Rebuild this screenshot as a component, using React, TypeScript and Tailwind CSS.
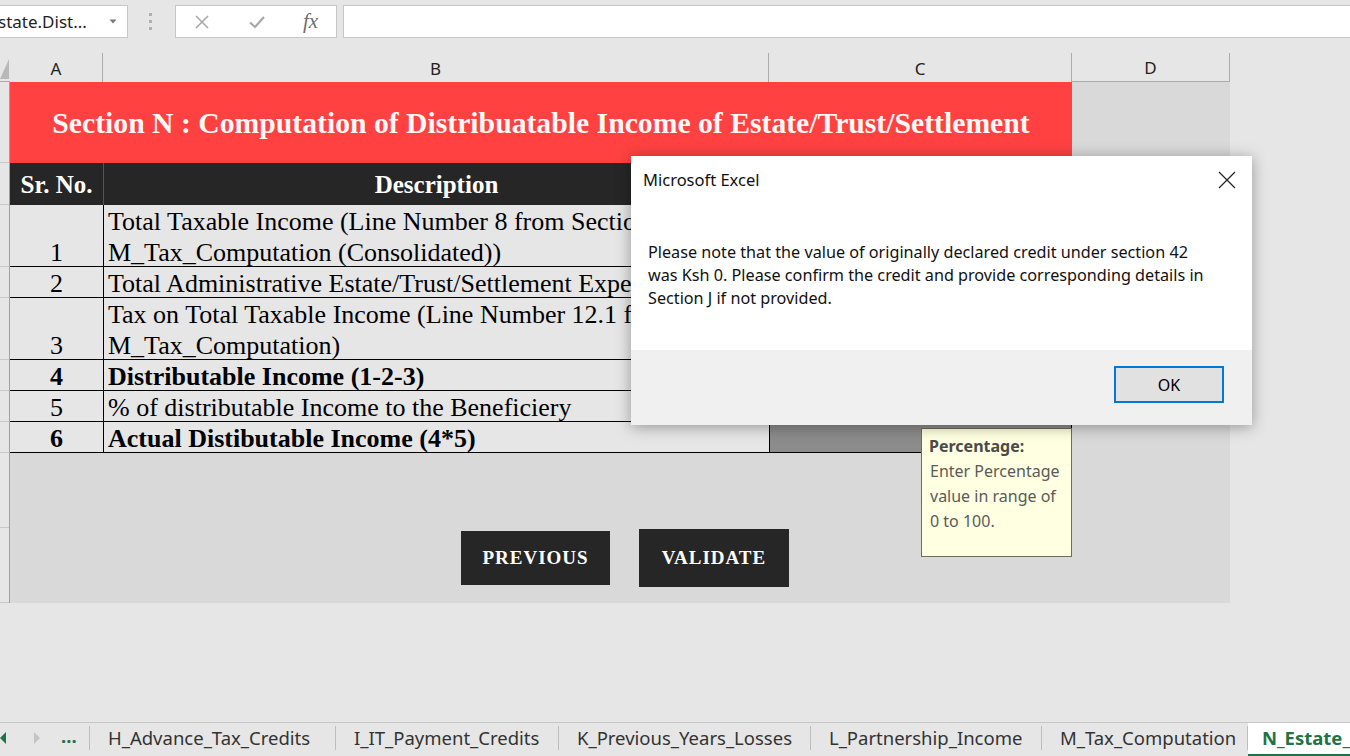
import type { ReactNode } from "react";

interface SheetRow {
  no: string;
  lines: string[];
  height: string;
  bold?: boolean;
  shaded?: boolean;
}

const ROWS: SheetRow[] = [
  {
    no: "1",
    lines: ["Total Taxable Income (Line Number 8 from Section", "M_Tax_Computation (Consolidated))"],
    height: "h-[62px]",
  },
  { no: "2", lines: ["Total Administrative Estate/Trust/Settlement Expenses"], height: "h-[31px]" },
  {
    no: "3",
    lines: ["Tax on Total Taxable Income (Line Number 12.1 from Section", "M_Tax_Computation)"],
    height: "h-[62px]",
  },
  { no: "4", lines: ["Distributable Income (1-2-3)"], height: "h-[31px]", bold: true },
  { no: "5", lines: ["% of distributable Income to the Beneficiery"], height: "h-[31px]" },
  { no: "6", lines: ["Actual Distibutable Income (4*5)"], height: "h-[31px]", bold: true, shaded: true },
];

// heights of the excel rows down the left strip
const STRIP_ROWS = ["h-[81px]", "h-[42px]", "h-[62px]", "h-[31px]", "h-[62px]", "h-[31px]", "h-[31px]", "h-[31px]", "h-[75px]", "h-[75px]"];

interface SheetTab {
  label: string;
  width: string;
}

const TABS: SheetTab[] = [
  { label: "H_Advance_Tax_Credits", width: "w-[246px]" },
  { label: "I_IT_Payment_Credits", width: "w-[223px]" },
  { label: "K_Previous_Years_Losses", width: "w-[252px]" },
  { label: "L_Partnership_Income", width: "w-[231px]" },
  { label: "M_Tax_Computation", width: "w-[206px]" },
];

export default function App() {
  return (
    <div className="relative flex h-[756px] w-[1350px] flex-col overflow-hidden bg-[#e6e6e6] font-['Noto_Sans',sans-serif] text-[#222]">
      <FormulaBar />
      <ColumnHeaders />

      <div className="flex h-[521px]">
        <div className="flex w-[10px] flex-col border-r border-[#a0a0a0]">
          {STRIP_ROWS.map((h, i) => (
            <div key={i} className={`${h} border-b border-[#c8c8c8]`} />
          ))}
        </div>

        <div className="flex w-[1220px] flex-col bg-[#d9d9d9]">
          <div className="flex h-[81px] w-[1062px] items-center justify-center bg-[#ff4141] pt-[2px] font-['Liberation_Serif',serif] text-[29.7px] font-bold text-[#fff8f5]">
            Section N : Computation of Distribuatable Income of Estate/Trust/Settlement
          </div>

          <div className="flex h-[42px] w-[1062px] bg-[#262626] font-['Liberation_Serif',serif] text-[25px] font-bold text-white">
            <div className="flex w-[93px] items-center justify-center pt-[2px]">Sr. No.</div>
            <div className="flex w-[666px] items-center justify-center border-l border-[#555] pt-[2px]">Description</div>
            <div className="flex-1 border-l border-[#555]" />
          </div>

          {ROWS.map((row) => (
            <TableRow key={row.no} row={row} />
          ))}

          <div className="mt-[76px] flex items-center pl-[451px] font-['Liberation_Serif',serif] text-[19px] font-bold tracking-[1px] text-white">
            <div className="flex h-[54px] w-[149px] items-center justify-center bg-[#262626]">PREVIOUS</div>
            <div className="ml-[29px] flex h-[58px] w-[150px] items-center justify-center bg-[#262626]">VALIDATE</div>
          </div>
        </div>

        <div className="flex-1" />
      </div>

      <div className="flex-1" />
      <SheetTabs />

      {/* data validation input message */}
      <div className="absolute left-[921px] top-[428px] h-[129px] w-[151px] border border-[#6d6d5e] bg-[#ffffe1] pl-[7px] pt-[5px] text-[16px] leading-[25px] text-[#5a5a5a]">
        <div className="font-bold text-[#4a4a4a]">Percentage:</div>
        <div className="pl-[1px]">
          Enter Percentage
          <br />
          value in range of
          <br />0 to 100.
        </div>
      </div>

      <MessageBox />
    </div>
  );
}

function TableRow({ row }: { row: SheetRow }) {
  return (
    <div
      className={`flex ${row.height} w-[1062px] border-b border-black font-['Liberation_Serif',serif] text-[26px] leading-[31px] text-black ${row.bold ? "font-bold" : ""}`}
    >
      <div className="flex w-[93px] items-end justify-center bg-[#e7e6e6]">
        <span className="translate-y-[2px]">{row.no}</span>
      </div>
      <div className="flex w-[666px] flex-col justify-end overflow-hidden whitespace-nowrap border-l border-black bg-[#e7e6e6] pl-[4px]">
        {row.lines.map((line) => (
          <div key={line} className="translate-y-[2px]">
            {line}
          </div>
        ))}
      </div>
      <div className={`flex-1 border-x border-black ${row.shaded ? "bg-[#8c8c8c]" : "bg-[#e7e6e6]"}`} />
    </div>
  );
}

function FormulaBar() {
  return (
    <div className="flex h-[53px] items-start pt-[5px]">
      <div className="flex h-[33px] w-[128px] items-center justify-between overflow-hidden border border-l-0 border-[#c6c6c6] bg-white pr-[10px]">
        <span className="-ml-[2px] whitespace-nowrap text-[17px] text-[#222]">state.Dist...</span>
        <svg width="8" height="5" viewBox="0 0 8 5">
          <path d="M0.5 0.5 L7.5 0.5 L4 4.5 Z" fill="#7a7a7a" />
        </svg>
      </div>

      <div className="ml-[21px] flex flex-col gap-[4px] pt-[8px]">
        <span className="h-[3px] w-[3px] bg-[#b0b0b0]" />
        <span className="h-[3px] w-[3px] bg-[#b0b0b0]" />
        <span className="h-[3px] w-[3px] bg-[#b0b0b0]" />
      </div>

      <div className="ml-[23px] flex h-[33px] w-[162px] items-center border border-[#c6c6c6] bg-white">
        <svg className="ml-[18px]" width="16" height="16" viewBox="0 0 16 16">
          <path d="M2 2 L14 14 M14 2 L2 14" stroke="#a8a8a8" strokeWidth="1.6" />
        </svg>
        <svg className="ml-[38px]" width="18" height="16" viewBox="0 0 18 16">
          <path d="M2 8.5 L7 13 L16 3" stroke="#a8a8a8" strokeWidth="2.2" fill="none" />
        </svg>
        <span className="ml-[37px] font-['Liberation_Serif',serif] text-[21px] italic leading-none text-[#6f6f6f]">
          fx
        </span>
      </div>

      <div className="ml-[6px] h-[33px] flex-1 border border-r-0 border-[#c6c6c6] bg-white" />
    </div>
  );
}

function ColumnHeaders() {
  const cell = "flex items-center justify-center border-r border-[#ababab] pt-[2px] text-[17px] text-[#222]";
  return (
    <div className="flex h-[29px]">
      <div className="flex w-[10px] items-end border-b border-[#ababab] pb-[2px]">
        <svg width="9" height="20" viewBox="0 0 9 20">
          <path d="M9 0 L9 20 L0 20 Z" fill="#b9b9b9" />
        </svg>
      </div>
      <div className={`${cell} w-[93px]`}>A</div>
      <div className={`${cell} w-[666px]`}>B</div>
      <div className={`${cell} w-[303px]`}>C</div>
      <div className={`${cell} w-[158px] border-b`}>D</div>
      <div className="flex-1" />
    </div>
  );
}

function SheetTabs() {
  return (
    <div className="flex h-[34px] items-start border-t border-[#c6c6c6] pt-[3px] text-[18.5px] text-[#333]">
      <div className="flex h-[24px] items-center">
        <svg width="6" height="12" viewBox="0 0 6 12">
          <path d="M6 0 L0 6 L6 12 Z" fill="#217346" />
        </svg>
        <svg className="ml-[28px]" width="6" height="12" viewBox="0 0 6 12">
          <path d="M0 0 L6 6 L0 12 Z" fill="#c4c4c4" />
        </svg>
        <span className="ml-[21px] w-[28px] pb-[4px] font-bold leading-none text-[#217346]">...</span>
      </div>
      <Divider />
      {TABS.map((tab) => (
        <TabLabel key={tab.label} width={tab.width}>
          {tab.label}
        </TabLabel>
      ))}
      <div className="-mt-[3px] flex h-[34px] flex-1 items-start border-b-[3px] border-[#217346] bg-white pl-[14px] pt-[3px] font-bold text-[#217346]">
        <span className="flex h-[24px] items-center">N_Estate_</span>
      </div>
    </div>
  );
}

function Divider() {
  return <span className="h-[24px] w-px bg-[#bdbdbd]" />;
}

function TabLabel({ width, children }: { width: string; children: ReactNode }) {
  return (
    <div className={`flex h-[24px] ${width} items-center border-r border-[#bdbdbd] pl-[18px]`}>{children}</div>
  );
}

function MessageBox() {
  return (
    <div className="absolute left-[631px] top-[156px] flex h-[269px] w-[621px] flex-col bg-white shadow-[0_2px_14px_rgba(0,0,0,0.35)]">
      <div className="flex h-[48px] items-center justify-between pl-[12px] pr-[16px]">
        <span className="text-[16.5px] text-[#111]">Microsoft Excel</span>
        <svg width="18" height="18" viewBox="0 0 18 18">
          <path d="M1 1 L17 17 M17 1 L1 17" stroke="#222" strokeWidth="1.2" />
        </svg>
      </div>
      <div className="mt-[37px] flex-1 pl-[17px] text-[16.2px] leading-[23px] text-[#111]">
        Please note that the value of originally declared credit under section 42
        <br />
        was Ksh 0. Please confirm the credit and provide corresponding details in
        <br />
        Section J if not provided.
      </div>
      <div className="flex h-[75px] items-start justify-end bg-[#f0f0f0] pr-[28px] pt-[16px]">
        <div className="flex h-[37px] w-[110px] items-center justify-center border-2 border-[#0078d7] bg-[#e1e1e1] text-[16px] text-black">
          OK
        </div>
      </div>
    </div>
  );
}
